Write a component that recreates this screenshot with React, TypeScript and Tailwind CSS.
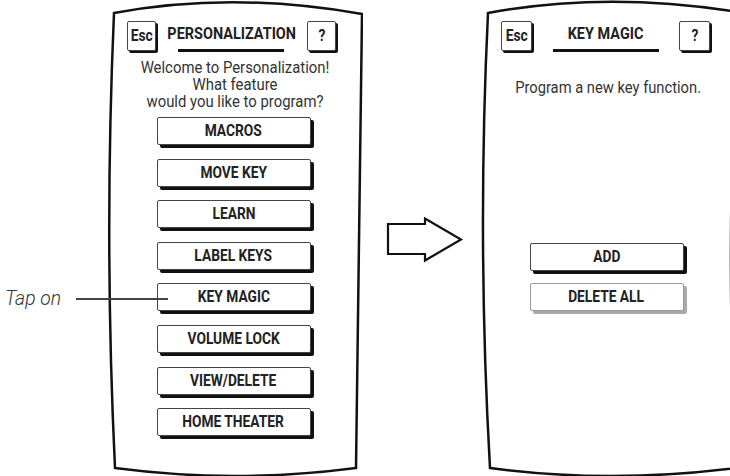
const font = "font-['Roboto',sans-serif]";

const Outline = ({ d }: { d: string }) => (
  <svg className="absolute inset-0" width="256" height="476" viewBox="0 0 256 476" fill="none">
    <path d={d} stroke="#111" strokeWidth="2.5" strokeLinejoin="miter" />
  </svg>
);

const leftShape = "M7 13 Q125 -9 255 14 Q252 240 249 468 Q128 484 8 468 Q-3 240 7 13 Z";
const rightShape = "M7 13 Q125 -9 257 12 Q244 240 255 468 Q128 484 9 468 Q-4 240 7 13 Z";

const KeyBox = ({ label }: { label: string }) => (
  <div className="w-[31px] h-[30px] flex items-center justify-center border border-[#444] rounded-[2px] shadow-[2px_2px_0_#111] bg-white">
    <span className={`inline-block scale-x-[0.86] text-[16px] font-bold text-[#222] ${font}`}>{label}</span>
  </div>
);

const Header = ({ title }: { title: string }) => (
  <div className="flex items-start justify-between pl-[20px] pr-[27px] pt-[21px]">
    <KeyBox label="Esc" />
    <div className="flex flex-col items-center pt-[3px]">
      <span className={`inline-block scale-x-[0.85] text-[17px] leading-[19px] font-bold text-[#222] ${font}`}>{title}</span>
      <div className="w-[106px] h-[3px] bg-[#111] mt-[6px]" />
    </div>
    <KeyBox label="?" />
  </div>
);

const MenuButton = ({ label, muted }: { label: string; muted?: boolean }) => (
  <div
    className={
      muted
        ? "w-[154px] h-[28px] flex items-center justify-center border border-[#999] rounded-[2px] shadow-[3px_3px_0_#aaa] bg-white"
        : "w-[154px] h-[28px] flex items-center justify-center border border-[#444] rounded-[2px] shadow-[3px_3px_0_#111] bg-white"
    }
  >
    <span className={`inline-block scale-x-[0.86] text-[16px] font-bold text-[#222] ${font}`}>{label}</span>
  </div>
);

const menu = ["MACROS", "MOVE KEY", "LEARN", "LABEL KEYS", "KEY MAGIC", "VOLUME LOCK", "VIEW/DELETE", "HOME THEATER"];

export default function App() {
  return (
    <div className="relative w-[730px] h-[476px] overflow-hidden bg-white flex">
      {/* left annotation */}
      <div className="w-[107px] shrink-0 pt-[285px] pl-[5px]">
        <span className="inline-block origin-left scale-x-[0.92] text-[21px] leading-[26px] italic font-light text-[#333] font-['Roboto',sans-serif]">
          Tap on
        </span>
      </div>

      {/* personalization screen */}
      <div className="relative w-[256px] h-[476px] shrink-0">
        <Outline d={leftShape} />
        <div className="relative">
          <Header title="PERSONALIZATION" />
          <div className={`mt-[7px] text-center scale-x-[0.93] text-[16px] leading-[17px] text-[#333] ${font}`}>
            <p>Welcome to Personalization!</p>
            <p>What feature</p>
            <p>would you like to program?</p>
          </div>
          <div className="flex flex-col items-center gap-[13.6px] pt-[7px] pr-[3px]">
            {menu.map((m) => (
              <MenuButton key={m} label={m} />
            ))}
          </div>
        </div>
      </div>

      {/* arrow */}
      <div className="w-[118px] shrink-0 pt-[217px] pl-[23px]">
        <svg width="78" height="46" viewBox="0 0 78 46" fill="none">
          <path d="M2 7 H39 V1.5 L75 22.5 L39 43.5 V37 H2 Z" stroke="#111" strokeWidth="2.2" strokeLinejoin="miter" />
        </svg>
      </div>

      {/* key magic screen */}
      <div className="relative w-[256px] h-[476px] shrink-0">
        <Outline d={rightShape} />
        <div className="relative">
          <Header title="KEY MAGIC" />
          <p className={`mt-[27px] text-center pr-[2px] scale-x-[0.92] text-[16px] leading-[18px] text-[#333] ${font}`}>
            Program a new key function.
          </p>
          <div className="flex flex-col items-center gap-[12px] pt-[146px] pr-[5px]">
            <MenuButton label="ADD" />
            <MenuButton label="DELETE ALL" muted />
          </div>
        </div>
      </div>

      {/* callout line */}
      <div className="absolute left-[76px] top-[298px] w-[92px] h-[1.5px] bg-[#444]" />
    </div>
  );
}
